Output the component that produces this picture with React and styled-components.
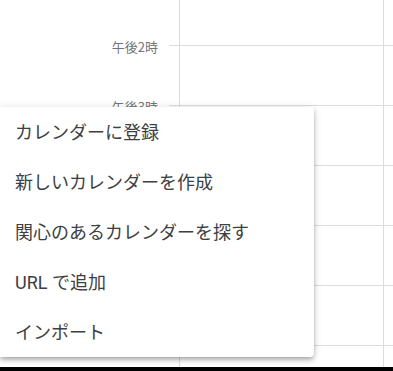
import styled, { createGlobalStyle } from "styled-components";

const GlobalStyle = createGlobalStyle`
  html, body {
    margin: 0;
    padding: 0;
    background: #ffffff;
  }
  body {
    font-family: Roboto, "Noto Sans CJK JP", "Noto Sans", sans-serif;
  }
`;

// labels further down sit under the open menu, so only the visible ones are drawn
const hours = [
  { label: "午後2時", height: 46 },
  { label: "午後3時", height: 60 },
  { label: "", height: 60 },
  { label: "", height: 60 },
  { label: "", height: 60 },
  { label: "", height: 60 },
  { label: "", height: 21, last: true },
];

const menuItems = [
  "カレンダーに登録",
  "新しいカレンダーを作成",
  "関心のあるカレンダーを探す",
  "URL で追加",
  "インポート",
];

const App = () => {
  return (
    <Page>
      <GlobalStyle />
      <Calendar>
        {hours.map((h, i) => (
          <Row key={i} $height={h.height}>
            <TimeLabel>{h.label}</TimeLabel>
            <Cells $last={h.last}>
              <Tick />
              <DayCell $width={204} />
              <DayCell />
            </Cells>
          </Row>
        ))}

        <Menu role="menu">
          {menuItems.map((item) => (
            <MenuItem key={item} role="menuitem">
              {item}
            </MenuItem>
          ))}
        </Menu>
      </Calendar>
      <BottomBar />
    </Page>
  );
};

const Page = styled.div`
  width: 393px;
  height: 371px;
  display: flex;
  flex-direction: column;
  overflow: hidden;
`;

const Calendar = styled.div`
  position: relative;
  height: 367px;
  background: #ffffff;
  display: flex;
  flex-direction: column;
  overflow: hidden;
`;

const Row = styled.div`
  display: flex;
  height: ${(p) => p.$height}px;
  flex: none;
`;

const TimeLabel = styled.div`
  width: 169px;
  box-sizing: border-box;
  padding-right: 11px;
  align-self: flex-end;
  margin-bottom: -8px;
  height: 15px;
  line-height: 15px;
  text-align: right;
  font-size: 13px;
  color: #70757a;
  font-family: "Noto Sans CJK JP", sans-serif;
  white-space: nowrap;
`;

const Cells = styled.div`
  flex: 1;
  display: flex;
  box-sizing: border-box;
  border-bottom: ${(p) => (p.$last ? "none" : "1px solid #dadce0")};
`;

const Tick = styled.div`
  width: 10px;
  flex: none;
`;

const DayCell = styled.div`
  border-left: 1px solid #dadce0;
  box-sizing: border-box;
  ${(p) => (p.$width ? `width: ${p.$width}px; flex: none;` : "flex: 1;")}
`;

const Menu = styled.div`
  position: absolute;
  left: 0;
  top: 107px;
  width: 314px;
  z-index: 5;
  background: #ffffff;
  border-radius: 0 2px 4px 0;
  box-shadow: 0 4px 5px 0 rgba(0, 0, 0, 0.14), 0 1px 10px 0 rgba(0, 0, 0, 0.12),
    0 2px 4px -1px rgba(0, 0, 0, 0.2);
  display: flex;
  flex-direction: column;
`;

const MenuItem = styled.div`
  height: 50px;
  box-sizing: border-box;
  padding: 0 0 3px 15px;
  display: flex;
  align-items: center;
  font-size: 18px;
  color: #3c4043;
  font-family: Roboto, "Noto Sans CJK JP", sans-serif;
  white-space: nowrap;
  cursor: pointer;
`;

const BottomBar = styled.div`
  height: 4px;
  flex: none;
  background: #000000;
`;

export default App;
